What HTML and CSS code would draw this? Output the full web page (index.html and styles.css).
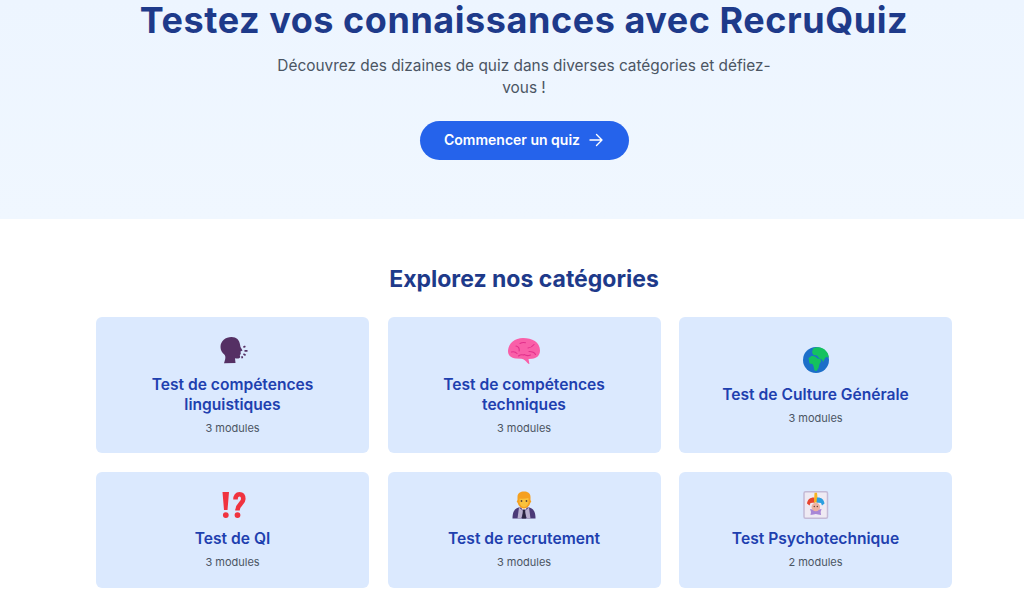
FILE: index.html
```html
<!DOCTYPE html>
<html lang="fr">
  <head>
    <meta charset="UTF-8" />
    <meta name="viewport" content="width=device-width, initial-scale=1.0" />
    <title>RecruQuiz</title>
    <link rel="stylesheet" href="styles.css">
  </head>
  <body>
    <section class="hero">
      <h1>Testez vos connaissances avec RecruQuiz</h1>
      <p>Découvrez des dizaines de quiz dans diverses catégories et défiez-vous !</p>
      <a class="start-button" href="#">
        Commencer un quiz
        <svg width="16" height="16" viewBox="0 0 16 16" fill="none" stroke="#fff" stroke-width="1.4" stroke-linecap="round" stroke-linejoin="round">
          <path d="M2 8h12M8.500 2.500 14 8l-5.500 5.500" />
        </svg>
      </a>
    </section>

    <section class="categories">
      <h2>Explorez nos catégories</h2>
      <div class="category-grid">
        <div class="category-card">
          <svg class="category-icon" viewBox="-3.500 -1 32 28">
            <path fill="#553064" d="M0 10C0 4 5 0 11 0c5 0 8 3 8.500 7.500L20 10l2 3.500-2 1 .3 2.500-1 1 .4 2c-.5 1.500-2.500 1.800-5.200 1.300L15 26l-11.500.2C5 22 5.500 19.500 3.800 17.500 1.500 15.500 0 13.500 0 10Z" />
            <path fill="#553064" d="M22.500 9.500l2-1 .8 1.500-2 1zM24 13h3v1.800h-3zM22.500 17.800l.8-1.500 2.200 1.200-.8 1.500zM20.500 19.500l1.600-.5.600 2-1.600.5z" />
          </svg>
          <h3>Test de compétences linguistiques</h3>
          <span class="module-count">3 modules</span>
        </div>
        <div class="category-card">
          <svg class="category-icon" viewBox="0 -2 32 28">
            <path fill="#f95fa8" d="M0 13C.5 5 7 0 15 0c9 0 17 4 17 12.500 0 5-3.500 8-8 8.300l-3.500.2 1 5.500-2-1.500c-1.800-2-3.500-3.800-6-4.300L8 20.500C3 20 0 17.500 0 13Z" />
            <path fill="none" stroke="#e2318c" stroke-width="1.100" stroke-linecap="round" d="M8 8c2.500.5 3.500 2.500 3.200 5M3.500 14c2-.5 4-.3 5.500 1.500M10.500 18c1.500-1.200 3-1.500 5-1M20 10c2.500-.3 4.500-1.500 6-3.500M21 13.500c3 0 5.500 1 6.500 3M16 16.500c2 1.200 4 1.500 6.500.5M12 5.500c1.500-1 3.500-1.200 5.500-.8" />
          </svg>
          <h3>Test de compétences techniques</h3>
          <span class="module-count">3 modules</span>
        </div>
        <div class="category-card">
          <svg class="category-icon" viewBox="0 0 28 28">
            <circle cx="14" cy="14" r="13" fill="#1c6fc9" />
            <path fill="#14c25f" d="M11 2.500C15 .5 21 1 24 5c2 2 2.500 4 2.800 6.500L24 11l-1.500 2-1.500 3-1-2.500-3-1.500-2-2.500-3.500-.5L10 6.500ZM6.500 12 10 9.800l3 .7 2.500 2 3 .5.5 2.500-1.500 2.500-1 4-2 3-2-.5-1-4.500-1-2-3-.5Z" />
          </svg>
          <h3>Test de Culture Générale</h3>
          <span class="module-count">3 modules</span>
        </div>
        <div class="category-card">
          <svg class="category-icon" viewBox="0 0 28 28">
            <path fill="#f0333f" d="M3.500 1h6.500L8.500 19H5ZM6.800 21.200a2.900 2.900 0 1 1 0 5.800 2.900 2.900 0 0 1 0-5.800ZM18.500 21.200a2.900 2.900 0 1 1 0 5.800 2.900 2.900 0 0 1 0-5.800Z" />
            <path fill="none" stroke="#f0333f" stroke-width="4.600" d="M16.500 8.500C16.500 5 18 3.300 20.500 3.300S24.300 5 24.300 8C24.300 12.500 18.500 13 18.500 19.500" />
          </svg>
          <h3>Test de QI</h3>
          <span class="module-count">3 modules</span>
        </div>
        <div class="category-card">
          <svg class="category-icon" viewBox="0 0 28 28">
            <path fill="#4b3a78" d="M2.500 27.500c0-6 1.500-9.500 6-11h11c4.500 1.500 6 5 6 11Z" />
            <path fill="#b9b0cf" d="M9 16.500l5 4-3 7H7.500ZM19 16.500l-5 4 3 7h3.500Z" />
            <path fill="#fff" d="M11 16.500h6l-3 4Z" />
            <path fill="#2a2440" d="M13 18.500h2l1 9h-4Z" />
            <path fill="#f5a01f" d="M7.500 6c0-4 3-5.500 6.500-5.500S20.500 2 20.500 6v3l.8 1.500-1 1.500c-.8 3-3.500 5.500-6.300 5.500S8.500 15 7.700 12l-1-1.500L7.500 9Z" />
            <path fill="#f9c23c" d="M9.500 7.500c3 .5 6 .3 9-.5v4.500c-.5 2.500-2.300 4.500-4.500 4.500s-4-2-4.500-4.500Z" />
            <circle cx="11.500" cy="10" r=".9" fill="#5b4636" />
            <circle cx="16.500" cy="10" r=".9" fill="#5b4636" />
          </svg>
          <h3>Test de recrutement</h3>
          <span class="module-count">3 modules</span>
        </div>
        <div class="category-card">
          <svg class="category-icon" viewBox="0 0 28 28">
            <rect x="2" y=".8" width="23.500" height="26.400" rx="1.500" fill="#efeaf3" stroke="#c4bad6" stroke-width="1.500" />
            <path fill="#e8452f" d="M5 12.500C5.500 8 9 6 12.500 6.500l.5 5-4.500.500-1 2.500Z" />
            <path fill="#f7b422" d="M12.500 1.800h2.500l1 9.700h-4Z" />
            <path fill="#2b9fe0" d="M22.500 12.500C22 8 18.500 6 15 6.500l-.5 5 4.500.500 1 2.500Z" />
            <path fill="#a887d6" d="M8 18l3 .5 2.800 1.500 2.800-1.500 3-.5-1 3 .5 3-3-.5-2.300-.5-2.300.5-3 .5.500-3Z" />
            <circle cx="13.800" cy="16" r="4.300" fill="#eeb1a2" />
            <circle cx="12.300" cy="15.500" r=".7" fill="#5b4636" />
            <circle cx="15.300" cy="15.500" r=".7" fill="#5b4636" />
          </svg>
          <h3>Test Psychotechnique</h3>
          <span class="module-count">2 modules</span>
        </div>
      </div>
    </section>
  </body>
</html>
```

FILE: styles.css
```css
body {
  font-family: Inter, "Open Sans", sans-serif;
  margin: 0;
  background-color: #fff;
  overflow: hidden;
}
.hero {
  height: 219px;
  box-sizing: border-box;
  padding-left: 24px;
  background: linear-gradient(#edf5ff, #f0f7ff);
  text-align: center;
}
.hero h1 {
  margin: 0;
  font-size: 36px;
  line-height: 40px;
  font-weight: 700;
  letter-spacing: 0.55px;
  color: #1e3a8a;
}
.hero p {
  width: 520px;
  margin: 15px auto 0;
  font-size: 15.4px;
  line-height: 22px;
  color: #4b5563;
}
.start-button {
  display: inline-flex;
  align-items: center;
  justify-content: center;
  gap: 8px;
  width: 209px;
  height: 39px;
  box-sizing: border-box;
  margin-top: 22px;
  padding-bottom: 2px;
  border-radius: 20px;
  background-color: #2563eb;
  color: #fff;
  font-size: 14px;
  font-weight: 600;
  text-decoration: none;
}
.categories {
  padding: 46px 72px 0 96px;
}
.categories h2 {
  margin: 0 0 24px;
  font-size: 23px;
  line-height: 28px;
  font-weight: 700;
  text-align: center;
  color: #1e3a8a;
}
.category-grid {
  display: grid;
  grid-template-columns: repeat(3, 273px);
  gap: 18.5px;
}
.category-card {
  display: flex;
  flex-direction: column;
  align-items: center;
  justify-content: center;
  padding: 19px 16px 16.5px;
  border-radius: 6px;
  background-color: #dbe9fe;
  text-align: center;
}
.category-icon {
  width: 32px;
  height: 28px;
  margin-bottom: 10.5px;
}
.category-card h3 {
  margin: 0 0 5px;
  font-size: 15.6px;
  line-height: 20px;
  font-weight: 600;
  color: #1e40af;
}
.module-count {
  font-size: 11px;
  line-height: 17px;
  color: #4b5563;
}
```
